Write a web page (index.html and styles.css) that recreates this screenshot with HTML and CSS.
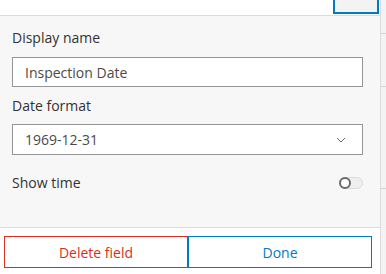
FILE: index.html
```html
<!DOCTYPE html>
<html lang="en">
  <head>
    <meta charset="UTF-8" />
    <title>Field settings</title>
    <link rel="stylesheet" href="styles.css">
  </head>
  <body>
    <div class="main">
      <div class="topbar"><span class="tab-active"></span></div>
      <div class="panel">
        <div class="item">
          <label>Display name</label>
          <input class="field" value="Inspection Date" />
        </div>
        <div class="item">
          <label>Date format</label>
          <div class="field select">
            <span>1969-12-31</span>
            <svg width="10" height="6" viewBox="0 0 10 6"><path d="M1 1l4 4 4-4" fill="none" stroke="#6a6a6a" stroke-width="1"/></svg>
          </div>
        </div>
        <div class="toggle-row">
          <span>Show time</span>
          <span class="switch"><span class="knob"></span></span>
        </div>
      </div>
      <div class="footer">
        <button class="btn btn-danger">Delete field</button>
        <button class="btn btn-primary">Done</button>
      </div>
    </div>
    <div class="strip">
      <div class="row r1"></div>
      <div class="row r2"></div>
      <div class="row r3"></div>
    </div>
  </body>
</html>
```

FILE: styles.css
```css
body {
  margin: 0;
  width: 386px;
  height: 274px;
  display: flex;
  font-family: "Open Sans", Lato, sans-serif;
  font-size: 14px;
  color: #323232;
  background: #fff;
  overflow: hidden;
}
.main {
  width: 380px;
  display: flex;
  flex-direction: column;
}
.topbar {
  height: 15px;
  border-bottom: 1px solid #dcdcdc;
  display: flex;
  justify-content: flex-end;
  padding-right: 1px;
}
.tab-active {
  width: 42px;
  height: 12px;
  background: #f3f3f3;
  border: 2px solid #007ac2;
  border-top: none;
}
.panel {
  height: 212px;
  box-sizing: border-box;
  background: #f7f7f7;
  border-bottom: 1px solid #dcdcdc;
  padding: 12px 17px 0 12px;
}
.item {
  margin-bottom: 9px;
}
label {
  display: block;
  line-height: 20px;
  margin-bottom: 9px;
}
.item + .item label {
  margin-bottom: 8px;
}
.field {
  display: flex;
  align-items: center;
  width: 351px;
  height: 30px;
  box-sizing: border-box;
  border: 1px solid #959595;
  background: #fff;
  padding: 0 12px;
  font-family: inherit;
  font-size: 14px;
  color: #4a4a4a;
  outline: none;
}
.select {
  height: 31px;
  justify-content: space-between;
  padding-right: 16px;
}
.toggle-row {
  display: flex;
  justify-content: space-between;
  align-items: center;
  margin-top: 18px;
  line-height: 20px;
}
.switch {
  position: relative;
  width: 24px;
  height: 12px;
  box-sizing: border-box;
  border: 1px solid #dcdcdc;
  border-radius: 6px;
  background: #efefef;
}
.knob {
  position: absolute;
  left: -1px;
  top: -1px;
  width: 12px;
  height: 12px;
  box-sizing: border-box;
  border: 2px solid #6a6a6a;
  border-radius: 50%;
  background: #fff;
}
.footer {
  display: flex;
  padding: 8px 8px 0 4px;
}
.btn {
  flex: 1;
  height: 32px;
  background: #fff;
  font-family: inherit;
  font-size: 14px;
  border: 1px solid;
}
.btn-danger {
  color: #d83020;
  border-color: #d83020;
}
.btn-primary {
  color: #007ac2;
  border-color: #007ac2;
}
.strip {
  width: 5px;
  border-left: 1px solid #dcdcdc;
  background: #f3f3f3;
}
.row {
  border-bottom: 1px solid #d4d4d4;
}
.r1 { height: 33px; }
.r2 { height: 52px; }
.r3 { height: 101px; }
```
